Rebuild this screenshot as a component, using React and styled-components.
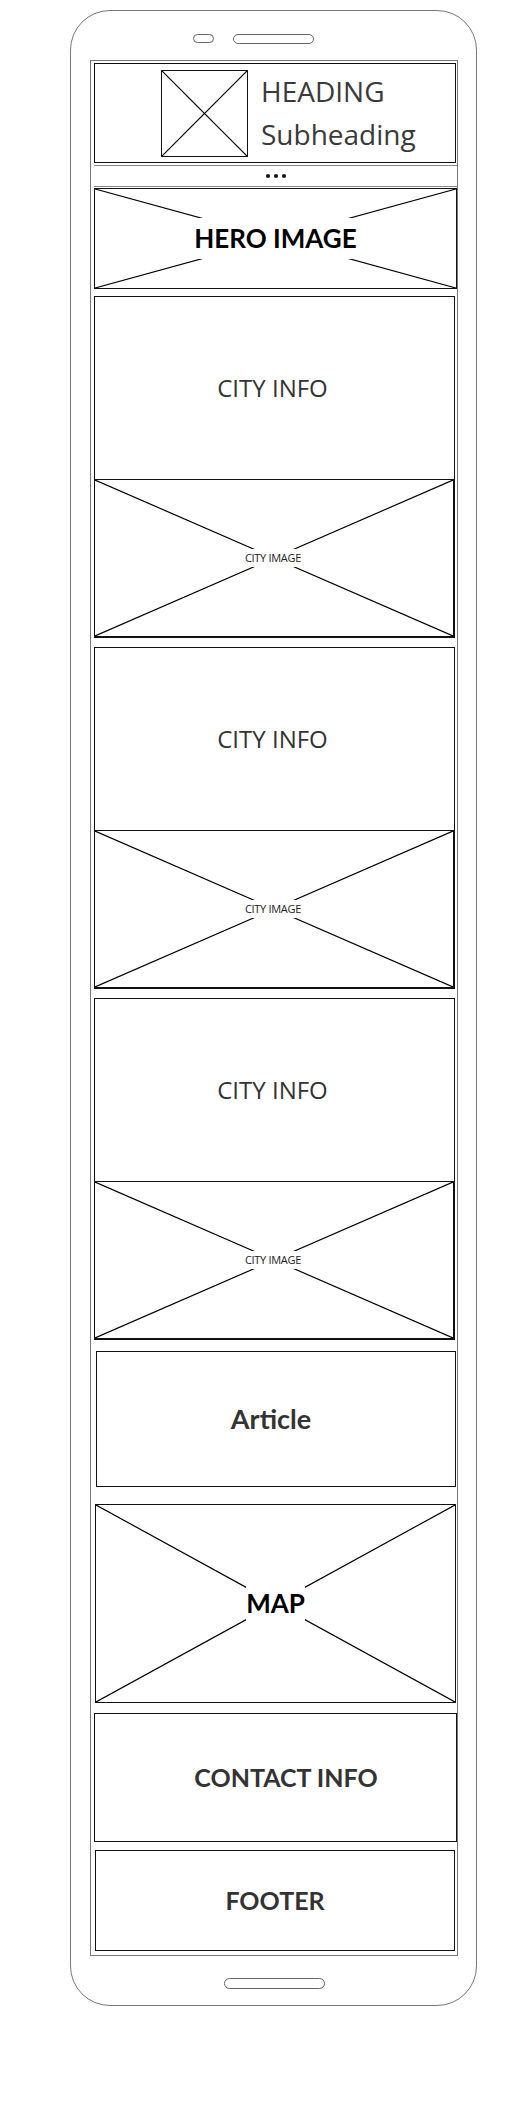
import React from 'react'
import styled, { createGlobalStyle } from 'styled-components'

const GlobalStyle = createGlobalStyle`
  body {
    margin: 0;
    background: #fff;
    font-family: "Open Sans", "Noto Sans", sans-serif;
  }
  * { box-sizing: border-box; }
`

const Phone = styled.div`
  width: 407px;
  margin: 10px 0 0 70px;
  padding: 23px 18px 16px 19px;
  border: 1px solid #777;
  border-radius: 40px;
  display: flex;
  flex-direction: column;
`

const TopBar = styled.div`
  display: flex;
  align-items: flex-start;
  gap: 19px;
  padding-left: 103px;
`

const Pill = styled.div`
  width: ${p => p.w}px;
  height: ${p => p.h}px;
  border: 1px solid #666;
  border-radius: ${p => p.h / 2}px;
`

const HomeButton = styled(Pill)`
  align-self: center;
  margin-top: 22px;
`

const Screen = styled.div`
  margin-top: 16px;
  border: 1px solid #777;
  padding: 2px 3px 4px;
  display: flex;
  flex-direction: column;
`

const Box = styled.div`
  position: relative;
  width: ${p => p.w || 362}px;
  height: ${p => p.h}px;
  margin-top: ${p => p.top || 0}px;
  margin-left: ${p => p.left || 0}px;
  border: 1px solid #111;
  display: flex;
  align-items: center;
  justify-content: center;
  padding-left: ${p => p.shift || 0}px;
  padding-right: ${p => p.back || 0}px;
`

const Header = styled.div`
  width: 362px;
  height: 100px;
  border: 1px solid #111;
  display: flex;
  align-items: flex-start;
  gap: 13px;
  padding: 6px 0 0 66px;
`

const Logo = styled.div`
  position: relative;
  width: 87px;
  height: 87px;
  border: 1px solid #111;
  flex-shrink: 0;
`

const Titles = styled.div`
  display: flex;
  flex-direction: column;
  font-size: 28px;
  line-height: 43px;
  color: #3a3a3a;
`

const Separator = styled.div`
  width: 363px;
  height: 22px;
  margin-top: 2px;
  border-top: 1px solid #888;
  border-bottom: 1px solid #888;
  display: flex;
  align-items: center;
  justify-content: center;
  gap: 4px;
`

const Dot = styled.span`
  width: 4px;
  height: 4px;
  border-radius: 50%;
  background: #111;
`

const Lines = styled.svg`
  position: absolute;
  inset: 0;
  width: 100%;
  height: 100%;
`

const Label = styled.span`
  position: relative;
  background: #fff;
  padding: ${p => p.pad || 0}px 0;
  font-family: ${p => (p.bold ? '"Lato", "Open Sans", sans-serif' : '"Open Sans", sans-serif')};
  font-weight: ${p => (p.bold ? 700 : 400)};
  font-size: ${p => p.size}px;
  letter-spacing: ${p => p.spacing || 0}px;
  color: ${p => p.color || '#333'};
  line-height: 1.1;
`

const Card = styled.div`
  display: flex;
  flex-direction: column;
  width: 361px;
  margin-top: ${p => p.top}px;
`

const CityInfo = styled.div`
  height: 184px;
  border: 1px solid #111;
  display: flex;
  align-items: center;
  justify-content: center;
  padding-right: 4px;
`

const CityImage = styled.div`
  position: relative;
  height: 158px;
  border-left: 1px solid #111;
  border-right: 2px solid #111;
  border-bottom: 2px solid #111;
  display: flex;
  align-items: center;
  justify-content: center;
  padding-right: 2px;
`

const Cross = () => (
  <Lines viewBox="0 0 100 100" preserveAspectRatio="none">
    <line x1="0" y1="0" x2="100" y2="100" stroke="#000" strokeWidth="1.2" vectorEffect="non-scaling-stroke" />
    <line x1="100" y1="0" x2="0" y2="100" stroke="#000" strokeWidth="1.2" vectorEffect="non-scaling-stroke" />
  </Lines>
)

const City = ({ top }) => (
  <Card top={top}>
    <CityInfo>
      <Label size={24}>CITY INFO</Label>
    </CityInfo>
    <CityImage>
      <Cross />
      <Label size={11} pad={3} spacing={-0.3} color="#222">CITY IMAGE</Label>
    </CityImage>
  </Card>
)

export default function App() {
  return (
    <>
      <GlobalStyle />
      <Phone>
        <TopBar>
          <Pill w={21} h={9} />
          <Pill w={81} h={10} />
        </TopBar>
        <Screen>
          <Header>
            <Logo><Cross /></Logo>
            <Titles>
              <span>HEADING</span>
              <span>Subheading</span>
            </Titles>
          </Header>
          <Separator>
            <Dot /><Dot /><Dot />
          </Separator>
          <Box h={101} w={363} top={1}>
            <Cross />
            <Label bold size={26} pad={6} color="#000">HERO IMAGE</Label>
          </Box>
          <City top={7} />
          <City top={9} />
          <City top={9} />
          <Box h={136} w={360} left={2} top={11} back={10}>
            <Label bold size={27}>Article</Label>
          </Box>
          <Box h={199} w={361} left={1} top={17}>
            <Cross />
            <Label bold size={26} pad={6} color="#000">MAP</Label>
          </Box>
          <Box h={129} w={363} top={10} shift={21}>
            <Label bold size={25}>CONTACT INFO</Label>
          </Box>
          <Box h={101} w={360} left={1} top={8}>
            <Label bold size={25}>FOOTER</Label>
          </Box>
        </Screen>
        <HomeButton w={101} h={11} />
      </Phone>
    </>
  )
}
